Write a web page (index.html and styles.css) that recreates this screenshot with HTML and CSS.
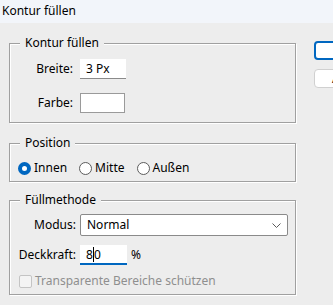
FILE: index.html
```html
<!DOCTYPE html>
<html lang="de">
<head>
    <meta charset="UTF-8">
    <title>Kontur füllen</title>
    <link rel="stylesheet" href="styles.css">
</head>
<body>
    <!-- Title bar -->
    <div class="titlebar">Kontur füllen</div>

    <div class="dialog">
        <div class="groups">
            <!-- Stroke -->
            <fieldset class="group group-stroke">
                <legend>Kontur füllen</legend>
                <div class="rows rows-stroke">
                    <label class="lbl">Breite:</label>
                    <div class="textbox">3 Px</div>
                    <label class="lbl">Farbe:</label>
                    <div class="swatch"></div>
                </div>
            </fieldset>

            <!-- Position -->
            <fieldset class="group group-position">
                <legend>Position</legend>
                <div class="radios">
                    <label class="radio"><input type="radio" name="pos" checked>Innen</label>
                    <label class="radio"><input type="radio" name="pos">Mitte</label>
                    <label class="radio"><input type="radio" name="pos">Außen</label>
                </div>
            </fieldset>

            <!-- Blending -->
            <fieldset class="group group-blend">
                <legend>Füllmethode</legend>
                <div class="rows rows-blend">
                    <label class="lbl">Modus:</label>
                    <div class="select">
                        <span>Normal</span>
                        <svg class="chevron" width="9" height="5" viewBox="0 0 9 5">
                            <path d="M0.5 0.5 L4.5 4.5 L8.5 0.5" fill="none" stroke="#5a5a5a" stroke-width="1"/>
                        </svg>
                    </div>
                    <label class="lbl">Deckkraft:</label>
                    <div class="opacity">
                        <div class="textbox textbox-focus">8<span class="caret"></span>0</div>
                        <span class="unit">%</span>
                    </div>
                </div>
                <label class="check"><input type="checkbox" disabled>Transparente Bereiche schützen</label>
            </fieldset>
        </div>

        <div class="buttons">
            <button class="btn btn-default">OK</button>
            <button class="btn">Abbrechen</button>
        </div>
    </div>
</body>
</html>
```

FILE: styles.css
```css
body {
    margin: 0;
    width: 333px;
    height: 305px;
    overflow: hidden;
    background-color: #ededed;
    font-family: "Noto Sans", "Open Sans", sans-serif;
    font-size: 12px;
    line-height: 16px;
    color: #000;
}

.titlebar {
    height: 23px;
    line-height: 22px;
    padding-left: 2px;
    background-color: #f2f5fa;
}

.dialog {
    display: flex;
    gap: 18px;
    padding-left: 9px;
}

.groups {
    width: 287px;
    flex-shrink: 0;
}

.group {
    margin: 0;
    padding: 0;
    min-inline-size: 0;
    border: 1px solid #a0a0a0;
    box-shadow: 1px 1px 0 #fff, inset 1px 1px 0 #fff;
}

.group legend {
    margin-left: 10px;
    padding: 0 5px;
    line-height: 16px;
    background-color: #ededed;
}

.group-stroke {
    margin-top: 12px;
    padding-top: 8px;
    padding-bottom: 9px;
}

.group-position {
    margin-top: 12px;
    padding-top: 9px;
    padding-bottom: 5px;
}

.group-blend {
    margin-top: 10px;
    padding-top: 6px;
    padding-bottom: 5px;
}

.rows {
    display: grid;
    align-items: center;
}

.rows-stroke {
    grid-template-columns: 63px 46px;
    column-gap: 7px;
    row-gap: 14px;
}

.rows-blend {
    grid-template-columns: 66px 1fr;
    column-gap: 4px;
    row-gap: 9px;
    padding-right: 7px;
}

.lbl {
    text-align: right;
}

.textbox {
    height: 20px;
    line-height: 20px;
    padding-left: 6px;
    background: #fff;
    border-bottom: 1px solid #8a8a8a;
    box-sizing: border-box;
}

.textbox-focus {
    width: 47px;
    border-bottom: 2px solid #0067c0;
}

.caret {
    display: inline-block;
    width: 1px;
    height: 15px;
    background: #000;
    vertical-align: -3px;
}

.swatch {
    width: 45px;
    height: 20px;
    box-sizing: border-box;
    background: #fff;
    border: 1px solid #9a9a9a;
}

.select {
    display: flex;
    align-items: center;
    justify-content: space-between;
    height: 22px;
    box-sizing: border-box;
    padding: 0 6px 0 6px;
    background: #fff;
    border: 1px solid #8a8a8a;
    border-radius: 2px;
}

.opacity {
    display: flex;
    align-items: center;
    gap: 4px;
}

.radios {
    display: flex;
    padding-left: 8px;
    gap: 12px;
}

.radio {
    display: flex;
    align-items: center;
    gap: 3px;
}

.radio input {
    appearance: none;
    margin: 0;
    width: 13px;
    height: 13px;
    box-sizing: border-box;
    border-radius: 50%;
    border: 1px solid #5c5c5c;
    background: #fff;
}

.radio input:checked {
    border: 4px solid #0067c0;
}

.check {
    display: flex;
    align-items: center;
    gap: 3px;
    margin-top: 8px;
    padding-left: 9px;
    color: #8f8f8f;
}

.check input {
    appearance: none;
    margin: 0;
    width: 13px;
    height: 13px;
    box-sizing: border-box;
    border: 1px solid #c4c4c4;
    border-radius: 2px;
    background: #f4f4f4;
}

.buttons {
    display: flex;
    flex-direction: column;
    gap: 9px;
    margin-top: 18px;
}

.btn {
    width: 75px;
    height: 19px;
    padding: 0 0 0 17px;
    text-align: left;
    font: inherit;
    line-height: 15px;
    background: #fff;
    border: 1px solid #d0d0d0;
    border-radius: 4px;
}

.btn-default {
    border: 2px solid #0067c0;
    color: transparent;
}
```
